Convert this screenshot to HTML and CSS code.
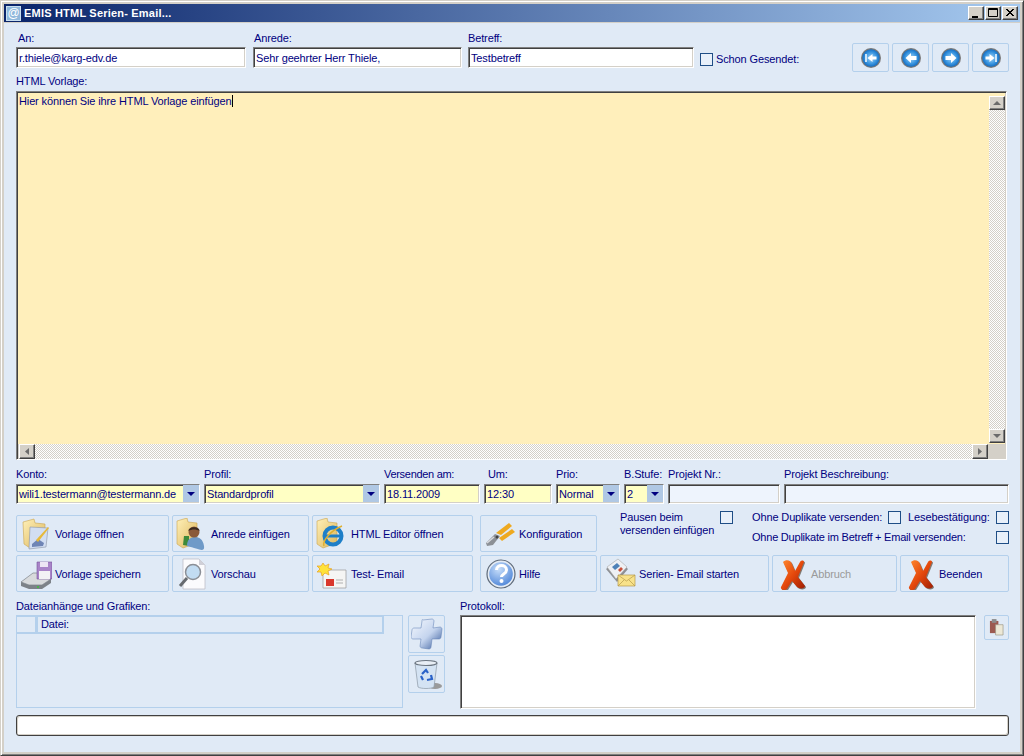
FILE: index.html
```html
<!DOCTYPE html>
<html lang="de">
<head>
<meta charset="utf-8">
<title>EMIS HTML Serien- Email...</title>
<link rel="stylesheet" href="styles.css">
</head>
<body>
<svg class="defs" width="0" height="0" aria-hidden="true">
  <defs>
    <radialGradient id="blueBall" cx="50%" cy="50%" r="55%"><stop offset="0" stop-color="#a8d4f4"/><stop offset=".6" stop-color="#3a96e0"/><stop offset="1" stop-color="#0c62b8"/></radialGradient>
    <linearGradient id="folder" x1="0" y1="0" x2="1" y2="1"><stop offset="0" stop-color="#fff0b8"/><stop offset="1" stop-color="#dcb65c"/></linearGradient>
    <linearGradient id="redX" x1="0" y1="0" x2="1" y2="1"><stop offset="0" stop-color="#ff8a30"/><stop offset=".5" stop-color="#e4480c"/><stop offset="1" stop-color="#9c1c04"/></linearGradient>
    <linearGradient id="plus" x1="0" y1="0" x2="1" y2="1"><stop offset="0" stop-color="#f6f9fe"/><stop offset=".55" stop-color="#c4d4ee"/><stop offset="1" stop-color="#2f5496"/></linearGradient>
    <radialGradient id="help" cx="40%" cy="30%" r="75%"><stop offset="0" stop-color="#c7defa"/><stop offset="1" stop-color="#4f86d8"/></radialGradient>
    <symbol id="navring" viewBox="0 0 22 22"><circle cx="11" cy="11" r="10" fill="#7a7a7a"/><circle cx="11" cy="11" r="8.700" fill="url(#blueBall)"/></symbol>
    <symbol id="bigx" viewBox="0 0 32 32">
      <path d="M7 4c3-3 8-2 9 2l3 7 5-9c1-2 4-2 4 0l-6 15 7 9c0 3-6 3-8 1l-5-6-5 8c-2 2-7 1-6-2l7-14z" fill="#7f7a74" transform="translate(1 1)"/>
      <path d="M7 4c3-3 8-2 9 2l3 7 5-9c1-2 4-2 4 0l-6 15 7 9c0 3-6 3-8 1l-5-6-5 8c-2 2-7 1-6-2l7-14z" fill="url(#redX)"/>
    </symbol>
  </defs>
</svg>
<div class="window">
  <header class="titlebar">
    <span class="app-icon">@</span>
    <span class="title">EMIS HTML Serien- Email...</span>
    <span class="win-buttons">
      <span class="win-btn"><svg width="14" height="12" viewBox="0 0 14 12"><rect x="3" y="9" width="6" height="2" fill="#000"/></svg></span>
      <span class="win-btn"><svg width="14" height="12" viewBox="0 0 14 12"><path d="M2.500 1.500h9v8h-9zM2 2.500h10" fill="none" stroke="#000"/></svg></span>
      <span class="win-btn"><svg width="14" height="12" viewBox="0 0 14 12"><path d="M3 2l7 7M4 2l7 7M10 2l-7 7M11 2l-7 7" stroke="#000" fill="none"/></svg></span>
    </span>
  </header>
  <main class="content">
    <section class="top-row">
      <div class="field f-an"><label class="lbl lbl-in2">An:</label><div class="input white">r.thiele@karg-edv.de</div></div>
      <div class="field f-anrede"><label class="lbl lbl-in1">Anrede:</label><div class="input white">Sehr geehrter Herr Thiele,</div></div>
      <div class="field f-betreff"><label class="lbl">Betreff:</label><div class="input white">Testbetreff</div></div>
      <span class="check check-sent"></span>
      <span class="lbl sent-label">Schon Gesendet:</span>
      <div class="nav">
        <button class="nav-btn"><svg width="22" height="22"><use href="#navring"/><path d="M6 7v8" stroke="#fff" stroke-width="1.500"/><path d="M7.500 11l5-4v2.500h4v3h-4V15z" fill="#fff"/></svg></button>
        <button class="nav-btn"><svg width="22" height="22"><use href="#navring"/><path d="M5.500 11l5.500-5v3h5.500v4H11v3z" fill="#fff"/></svg></button>
        <button class="nav-btn"><svg width="22" height="22"><use href="#navring"/><path d="M16.500 11L11 6v3H5.500v4H11v3z" fill="#fff"/></svg></button>
        <button class="nav-btn"><svg width="22" height="22"><use href="#navring"/><path d="M14.500 11l-5-4v2.500h-4v3h4V15z" fill="#fff"/><path d="M16 7v8" stroke="#fff" stroke-width="1.500"/></svg></button>
      </div>
    </section>

    <label class="lbl lbl-vorlage">HTML Vorlage:</label>
    <section class="editor">
      <div class="editor-text"><span class="typed">Hier können Sie ihre HTML Vorlage einfügen</span></div>
      <div class="vscroll">
        <span class="sb-btn"><svg width="14" height="12" viewBox="0 0 14 12"><path d="M7 4l4 4H3z" fill="#6b6b6b"/></svg></span>
        <span class="sb-track"></span>
        <span class="sb-btn"><svg width="14" height="12" viewBox="0 0 14 12"><path d="M7 8L3 4h8z" fill="#6b6b6b"/></svg></span>
      </div>
      <div class="hscroll">
        <span class="sb-btn"><svg width="14" height="13" viewBox="0 0 14 13"><path d="M5 6.500L9 3v7z" fill="#6b6b6b"/></svg></span>
        <span class="sb-track"></span>
        <span class="sb-btn"><svg width="14" height="13" viewBox="0 0 14 13"><path d="M9 6.500L5 3v7z" fill="#6b6b6b"/></svg></span>
      </div>
      <div class="sb-corner"></div>
    </section>

    <section class="mid-row">
      <div class="field"><label class="lbl">Konto:</label><div class="input yellow combo">wili1.testermann@testermann.de<span class="drop"></span></div></div>
      <div class="field"><label class="lbl">Profil:</label><div class="input yellow combo">Standardprofil<span class="drop"></span></div></div>
      <div class="field"><label class="lbl lbl-tight">Versenden am:</label><div class="input yellow">18.11.2009</div></div>
      <div class="field"><label class="lbl lbl-in4">Um:</label><div class="input yellow">12:30</div></div>
      <div class="field"><label class="lbl">Prio:</label><div class="input yellow combo">Normal<span class="drop"></span></div></div>
      <div class="field"><label class="lbl">B.Stufe:</label><div class="input yellow combo">2<span class="drop"></span></div></div>
      <div class="field"><label class="lbl">Projekt Nr.:</label><div class="input pale"></div></div>
      <div class="field"><label class="lbl">Projekt Beschreibung:</label><div class="input pale"></div></div>
    </section>

    <section class="actions">
      <button class="btn">
        <svg class="ico" viewBox="0 0 32 32"><path d="M3 4l11-3 1 4 10 1v20l-15 4-6-4z" fill="url(#folder)" stroke="#c9a550" stroke-width=".6"/><path d="M10 9l18 1-2 19-17 2z" fill="#d2def2" stroke="#8a93a5" stroke-width=".6"/><path d="M12 26l6-5 6 4-1 3-11 1z" fill="#6f85b5"/><path d="M16 22l12-13 1 1-11 14z" fill="#e6b93a"/></svg>
        <span>Vorlage öffnen</span>
      </button>
      <button class="btn">
        <svg class="ico" viewBox="0 0 32 32"><path d="M1 3l10-3 1 4 9 1v20L7 30 1 26z" fill="url(#folder)" stroke="#c9a550" stroke-width=".6"/><path d="M8 18l-1 9 6 1V18z" fill="#3d8a3a"/><path d="M11 28c0-7 4-9 8-9s8 2 9 9-5 3-17 0z" fill="#6f9ac8"/><circle cx="18" cy="14" r="5.500" fill="#8a5a3a"/><path d="M12.500 13c0-5 11-5 11 0-3-2-8-2-11 0z" fill="#3a2a20"/></svg>
        <span>Anrede einfügen</span>
      </button>
      <button class="btn">
        <svg class="ico" viewBox="0 0 32 32"><path d="M1 3l10-3 1 4 9 1v20L7 30 1 26z" fill="url(#folder)" stroke="#c9a550" stroke-width=".6"/><circle cx="17" cy="18" r="8.500" fill="none" stroke="#1e7fc8" stroke-width="4"/><path d="M10 18h14" stroke="#1e7fc8" stroke-width="3"/><path d="M8 28c-2-6 8-16 18-20" stroke="#e0b030" stroke-width="1.500" fill="none"/></svg>
        <span>HTML Editor öffnen</span>
      </button>
      <button class="btn btn-konfig">
        <svg class="ico" viewBox="0 0 32 32"><path d="M2 25l9-9 5 2-7 9-6 1z" fill="#8c9096"/><path d="M3 25l7-6" stroke="#d8dadd" stroke-width="1.500"/><path d="M12 15L25 5l3 3-11 9z" fill="#eea920"/><path d="M15 20L28 11l3 3-13 9z" fill="#eea920"/><circle cx="13" cy="19" r="1.500" fill="#444"/></svg>
        <span>Konfiguration</span>
      </button>
      <div class="options">
        <div class="opt-pause">
          <span class="lbl pause-text">Pausen beim<br>versenden einfügen</span>
          <span class="check"></span>
        </div>
        <div class="opt-rows">
          <div class="opt-row"><span class="lbl">Ohne Duplikate versenden:</span><span class="check"></span><span class="lbl lese">Lesebestätigung:</span><span class="check"></span></div>
          <div class="opt-row"><span class="lbl lbl-tighter">Ohne Duplikate im Betreff + Email versenden:</span><span class="check opt-end"></span></div>
        </div>
      </div>

      <button class="btn">
        <svg class="ico" viewBox="0 0 32 32"><path d="M1 24l12-9h12l6 6-9 6H9z" fill="#d8dadc" stroke="#6d7278" stroke-width=".6"/><path d="M1 24l8 3h13l9-6v4l-9 6H9l-8-3z" fill="#7d8288"/><circle cx="18" cy="29" r="1" fill="#3bc23b"/><path d="M17 4h15v17H17z" fill="#a884c8" stroke="#75549a" stroke-width=".6"/><path d="M20 4h8v5h-8z" fill="#ece6f4"/><path d="M19 13h11v8H19z" fill="#f2f2f5"/></svg>
        <span>Vorlage speichern</span>
      </button>
      <button class="btn">
        <svg class="ico" viewBox="0 0 32 32"><path d="M7 1h16l6 6v24H7z" fill="#fbfbfd" stroke="#b8b8c0" stroke-width=".7"/><path d="M23 1l6 6h-6z" fill="#d0d0d8"/><circle cx="17" cy="14" r="7.500" fill="#c2dcf2" stroke="#8b8f96" stroke-width="1.500"/><path d="M11 20l-7 8" stroke="#676b70" stroke-width="3"/></svg>
        <span>Vorschau</span>
      </button>
      <button class="btn">
        <svg class="ico" viewBox="0 0 32 32"><path d="M7 12h23v18H7z" fill="#f5f5f4" stroke="#9a9a9a" stroke-width=".7"/><path d="M10 21h8v7h-8z" fill="#d9372c"/><path d="M20 22h7M20 25h7" stroke="#b0b0b0"/><path d="M7 5l2 3 4-2-1 4 4 1-4 2 1 4-4-2-3 3-1-4-4 0 3-3-3-3 4 0z" fill="#ffe23a" stroke="#e8a020" stroke-width=".7"/></svg>
        <span>Test- Email</span>
      </button>
      <button class="btn btn-konfig">
        <svg class="ico" viewBox="0 0 32 32"><circle cx="17" cy="16" r="14" fill="#e4ebf4" stroke="#5f6b7a" stroke-width="1.200"/><circle cx="17" cy="16" r="11.800" fill="url(#help)"/><path d="M12.500 12c0-6 10-6 10 0 0 4-5 4-5 7" fill="none" stroke="#fff" stroke-width="3"/><circle cx="17.500" cy="23" r="2" fill="#fff"/></svg>
        <span>Hilfe</span>
      </button>
      <button class="btn">
        <svg class="ico" viewBox="0 0 32 32"><path d="M2 11L14 2l10 9-11 13z" fill="#8e9094"/><path d="M3 9L14 1l9 8-11 12z" fill="#eef0f4" stroke="#9a9a9a" stroke-width=".5"/><path d="M8 9l5-4 3 3-5 4z" fill="#4f82b8"/><path d="M14 12l3-3 2 2-3 3z" fill="#c9503a"/><path d="M14 17h17v11H14z" fill="#f8e28a" stroke="#b59a4a" stroke-width=".7"/><path d="M14 17l8.500 6 8.500-6M14 28l6-6M31 28l-6-6" fill="none" stroke="#b59a4a" stroke-width=".7"/></svg>
        <span>Serien- Email starten</span>
      </button>
      <button class="btn btn-off"><svg class="ico"><use href="#bigx"/></svg><span>Abbruch</span></button>
      <button class="btn"><svg class="ico"><use href="#bigx"/></svg><span>Beenden</span></button>
    </section>

    <section class="bottom">
      <div class="attach">
        <label class="lbl">Dateianhänge und Grafiken:</label>
        <div class="list">
          <div class="list-head"><span class="col-a"></span><span class="col-b">Datei:</span></div>
        </div>
      </div>
      <div class="tools">
        <button class="tool">
          <svg width="32" height="32" viewBox="0 0 32 32"><path d="M12 2l9-1c1 0 2 1 2 2l-1 7 7-1c1 0 2 1 2 2l-1 8c0 1-1 2-2 2h-7l-1 8c0 1-1 2-2 2l-7-1c-1 0-2-1-2-2l1-7H2c-1 0-2-1-2-2l1-7c0-1 1-2 2-2h7l1-7c0-1 0-2 1-1z" fill="url(#plus)" stroke="#5a7bb0" stroke-width=".5"/></svg>
        </button>
        <button class="tool">
          <svg width="32" height="32" viewBox="0 0 32 32"><ellipse cx="24" cy="28" rx="7" ry="3" fill="#9a9a9a"/><path d="M4 5l3 24c3 2 13 2 16 0l3-24z" fill="#d4e3f3" stroke="#8b98a5" stroke-width=".7"/><ellipse cx="15" cy="5" rx="11" ry="2.500" fill="#e8eef5" stroke="#6b7580" stroke-width="1.200"/><path d="M11 16l4-4 2 3M20 17l1 4-5 1M12 22l-2-4" fill="none" stroke="#2a62c8" stroke-width="2.200"/></svg>
        </button>
      </div>
      <div class="protocol">
        <label class="lbl">Protokoll:</label>
        <div class="input white log"></div>
      </div>
      <button class="clip">
        <svg width="15" height="17" viewBox="0 0 16 18"><path d="M1 2h9v13H1z" fill="#9c5a50"/><path d="M3 0h5v4H3z" fill="#8d8d8d"/><path d="M7 6h8v11H7z" fill="#ece8d6" stroke="#9a9684" stroke-width=".7"/></svg>
      </button>
    </section>

    <div class="progress"></div>
  </main>
</div>
</body>
</html>
```

FILE: styles.css
```css
* { box-sizing: border-box; }
html, body { margin: 0; padding: 0; }
body {
  width: 1024px;
  height: 756px;
  overflow: hidden;
  font-family: "Liberation Sans", Arial, sans-serif;
  font-size: 11px;
  letter-spacing: -.13px;
  color: #000080;
}
.defs { display: block; height: 0; }

.window {
  width: 1024px;
  height: 756px;
  display: flex;
  flex-direction: column;
  background: #d4d0c8;
  border: 1px solid;
  border-color: #d4d0c8 #404040 #404040 #d4d0c8;
  box-shadow: inset 1px 1px 0 #fff, inset -1px -1px 0 #808080;
  padding: 3px;
}

.titlebar {
  flex: none;
  height: 18px;
  display: flex;
  align-items: center;
  padding: 0 2px;
  background: linear-gradient(90deg, #0a246a, #a6caf0);
  color: #fff;
  font-size: 11px;
  font-weight: bold;
}
.app-icon {
  width: 15px;
  height: 15px;
  margin-right: 3px;
  background: #8fb8dc;
  border: 1px solid #c9dff0;
  color: #fff;
  font-size: 12px;
  line-height: 12px;
  font-weight: normal;
  text-align: center;
}
.title { white-space: nowrap; letter-spacing: .2px; }
.win-buttons { margin-left: auto; display: flex; gap: 1px; }
.win-btn {
  width: 16px;
  height: 14px;
  display: block;
  background: #d4d0c8;
  border: 1px solid;
  border-color: #fff #404040 #404040 #fff;
  box-shadow: inset -1px -1px 0 #808080;
}
.win-btn svg { display: block; }

.content {
  flex: 1;
  margin-top: 1px;
  padding: 9px 11px 0 12px;
  background: #e0eaf6;
  display: flex;
  flex-direction: column;
  min-height: 0;
}

.lbl {
  display: block;
  height: 13px;
  line-height: 13px;
  color: #000080;
  white-space: nowrap;
}
.lbl-in1 { margin-left: 1px; }
.lbl-in2 { margin-left: 2px; }
.lbl-in4 { margin-left: 4px; }
.lbl-tight { letter-spacing: -.3px; }
.lbl-tighter { letter-spacing: -.22px; }

.field { display: flex; flex-direction: column; gap: 2px; min-width: 0; }

.input {
  position: relative;
  height: 21px;
  border: 1px solid;
  border-color: #808080 #fff #fff #808080;
  box-shadow: inset 1px 1px 0 #404040, inset -1px -1px 0 #d4d0c8;
  padding: 0 3px 0 2px;
  line-height: 20px;
  color: #000080;
  white-space: nowrap;
  overflow: hidden;
}
.white { background: #fff; }
.yellow { background: #ffffc4; }
.pale { background: #eef4fd; }

.top-row { display: flex; height: 40px; flex: none; }
.f-an { width: 230px; }
.f-anrede { width: 209px; margin-left: 7px; }
.f-betreff { width: 226px; margin-left: 6px; }

.check {
  flex: none;
  display: block;
  width: 13px;
  height: 13px;
  background: #e8f0fa;
  border: 1px solid #1f4e86;
}
.check-sent { margin: 21px 0 0 6px; }
.sent-label { margin: 21px 0 0 3px; }
.nav { margin: 11px 0 0 auto; display: flex; gap: 3px; }
.nav-btn {
  width: 37px;
  height: 29px;
  padding: 0;
  background: #e0eaf6;
  border: 1px solid #b4d0ec;
  border-radius: 2px;
  display: flex;
  align-items: center;
  justify-content: center;
}

.lbl-vorlage { margin-top: 3px; flex: none; }

.editor {
  flex: none;
  width: 991px;
  height: 369px;
  margin-top: 3px;
  display: grid;
  grid-template-columns: 971px 16px 1fr;
  grid-template-rows: 350px 15px;
  background: #ffefbb;
  border: 1px solid;
  border-color: #808080 #fff #fff #808080;
  box-shadow: inset 1px 1px 0 #404040, inset -1px -1px 0 #d4d0c8;
  padding: 2px 1px 1px 1px;
}
.editor-text { padding: 1px 0 0 1px; line-height: 13px; color: #000080; }
.typed { border-right: 1px solid #000; padding-right: 1px; }
.vscroll { grid-column: 2; grid-row: 1; display: flex; flex-direction: column; padding: 2px 0 1px; }
.hscroll { grid-column: 1; grid-row: 2; display: flex; padding: 0 1px; background: #d4d0c8; }
.sb-corner { grid-column: 2 / 4; grid-row: 2; background: #d4d0c8; }
.sb-btn {
  flex: none;
  width: 16px;
  height: 14px;
  display: block;
  background: #d4d0c8;
  border: 1px solid;
  border-color: #fff #404040 #404040 #fff;
  box-shadow: inset -1px -1px 0 #808080;
}
.hscroll .sb-btn { height: 15px; }
.sb-btn svg { display: block; }
.sb-track {
  flex: 1;
  background-color: #fff;
  background-image: conic-gradient(#d4d0c8 25%, #fff 0 50%, #d4d0c8 0 75%, #fff 0);
  background-size: 2px 2px;
}

.mid-row {
  flex: none;
  display: grid;
  grid-template-columns: 184px 176px 96px 68px 64px 40px 112px 225px;
  column-gap: 4px;
  margin-top: 8px;
  height: 36px;
}
.mid-row .field { gap: 3px; }
.mid-row .input { height: 20px; line-height: 19px; }
.combo { padding-right: 17px; }
.drop {
  position: absolute;
  top: 0;
  right: 0;
  width: 16px;
  height: 17px;
  background: #b0c8e4;
}
.drop::after {
  content: "";
  position: absolute;
  left: 4px;
  top: 7px;
  border: 4px solid transparent;
  border-top: 4px solid #000080;
  border-bottom: 0;
}

.actions {
  flex: none;
  margin-top: 11px;
  display: grid;
  grid-template-columns: 153px 137px 161px 121px 169px 125px 109px;
  grid-template-rows: 37px 37px;
  gap: 3px;
}
.btn {
  display: flex;
  align-items: center;
  gap: 3px;
  padding: 0 0 0 3px;
  background: #e0eaf6;
  border: 1px solid #b4d0ec;
  border-radius: 2px;
  color: #000080;
  font: inherit;
  letter-spacing: inherit;
  white-space: nowrap;
}
.btn-konfig { margin-left: 4px; }
.btn-off { color: #9a9a9a; }
.ico { flex: none; width: 32px; height: 32px; display: block; }

.options {
  grid-column: 5 / 8;
  display: flex;
  margin-top: -4px;
  padding-left: 20px;
}
.opt-pause { width: 132px; display: flex; align-items: flex-start; }
.pause-text { width: 100px; height: 26px; }
.opt-rows { display: flex; flex-direction: column; gap: 7px; width: 257px; }
.opt-row { display: flex; gap: 6px; align-items: center; height: 13px; }
.lese { margin-left: 1px; }
.opt-row .lese + .check { margin-left: auto; }
.opt-end { margin-left: auto; }

.bottom { flex: none; display: flex; margin-top: 8px; height: 109px; }
.attach { width: 387px; display: flex; flex-direction: column; gap: 2px; }
.list {
  height: 93px;
  border: 1px solid #b4d0ec;
}
.list-head {
  display: flex;
  width: 367px;
  height: 18px;
  border-top: 1px solid #b4d0ec;
  border-bottom: 2px solid #b4d0ec;
}
.col-a { width: 21px; border-right: 3px solid #b4d0ec; }
.col-b {
  flex: 1;
  padding-left: 3px;
  line-height: 15px;
  border-right: 2px solid #b4d0ec;
}
.tools { margin: 15px 0 0 5px; width: 37px; display: flex; flex-direction: column; gap: 2px; }
.tool {
  width: 37px;
  height: 38px;
  padding: 0;
  background: #e0eaf6;
  border: 1px solid #b4d0ec;
  border-radius: 2px;
  display: flex;
  align-items: center;
  justify-content: center;
}
.protocol { width: 516px; margin-left: 15px; display: flex; flex-direction: column; gap: 2px; }
.log { height: 94px; }
.clip {
  width: 25px;
  height: 25px;
  margin: 15px 0 0 8px;
  padding: 0;
  background: #e0eaf6;
  border: 1px solid #b4d0ec;
  border-radius: 2px;
  display: flex;
  align-items: center;
  justify-content: center;
}

.progress {
  flex: none;
  height: 21px;
  margin-top: 6px;
  background: #fff;
  border: 1px solid #404040;
  border-radius: 3px;
  box-shadow: inset 1px 1px 0 #d4d0c8, inset -1px -1px 0 #d4d0c8;
}
```
